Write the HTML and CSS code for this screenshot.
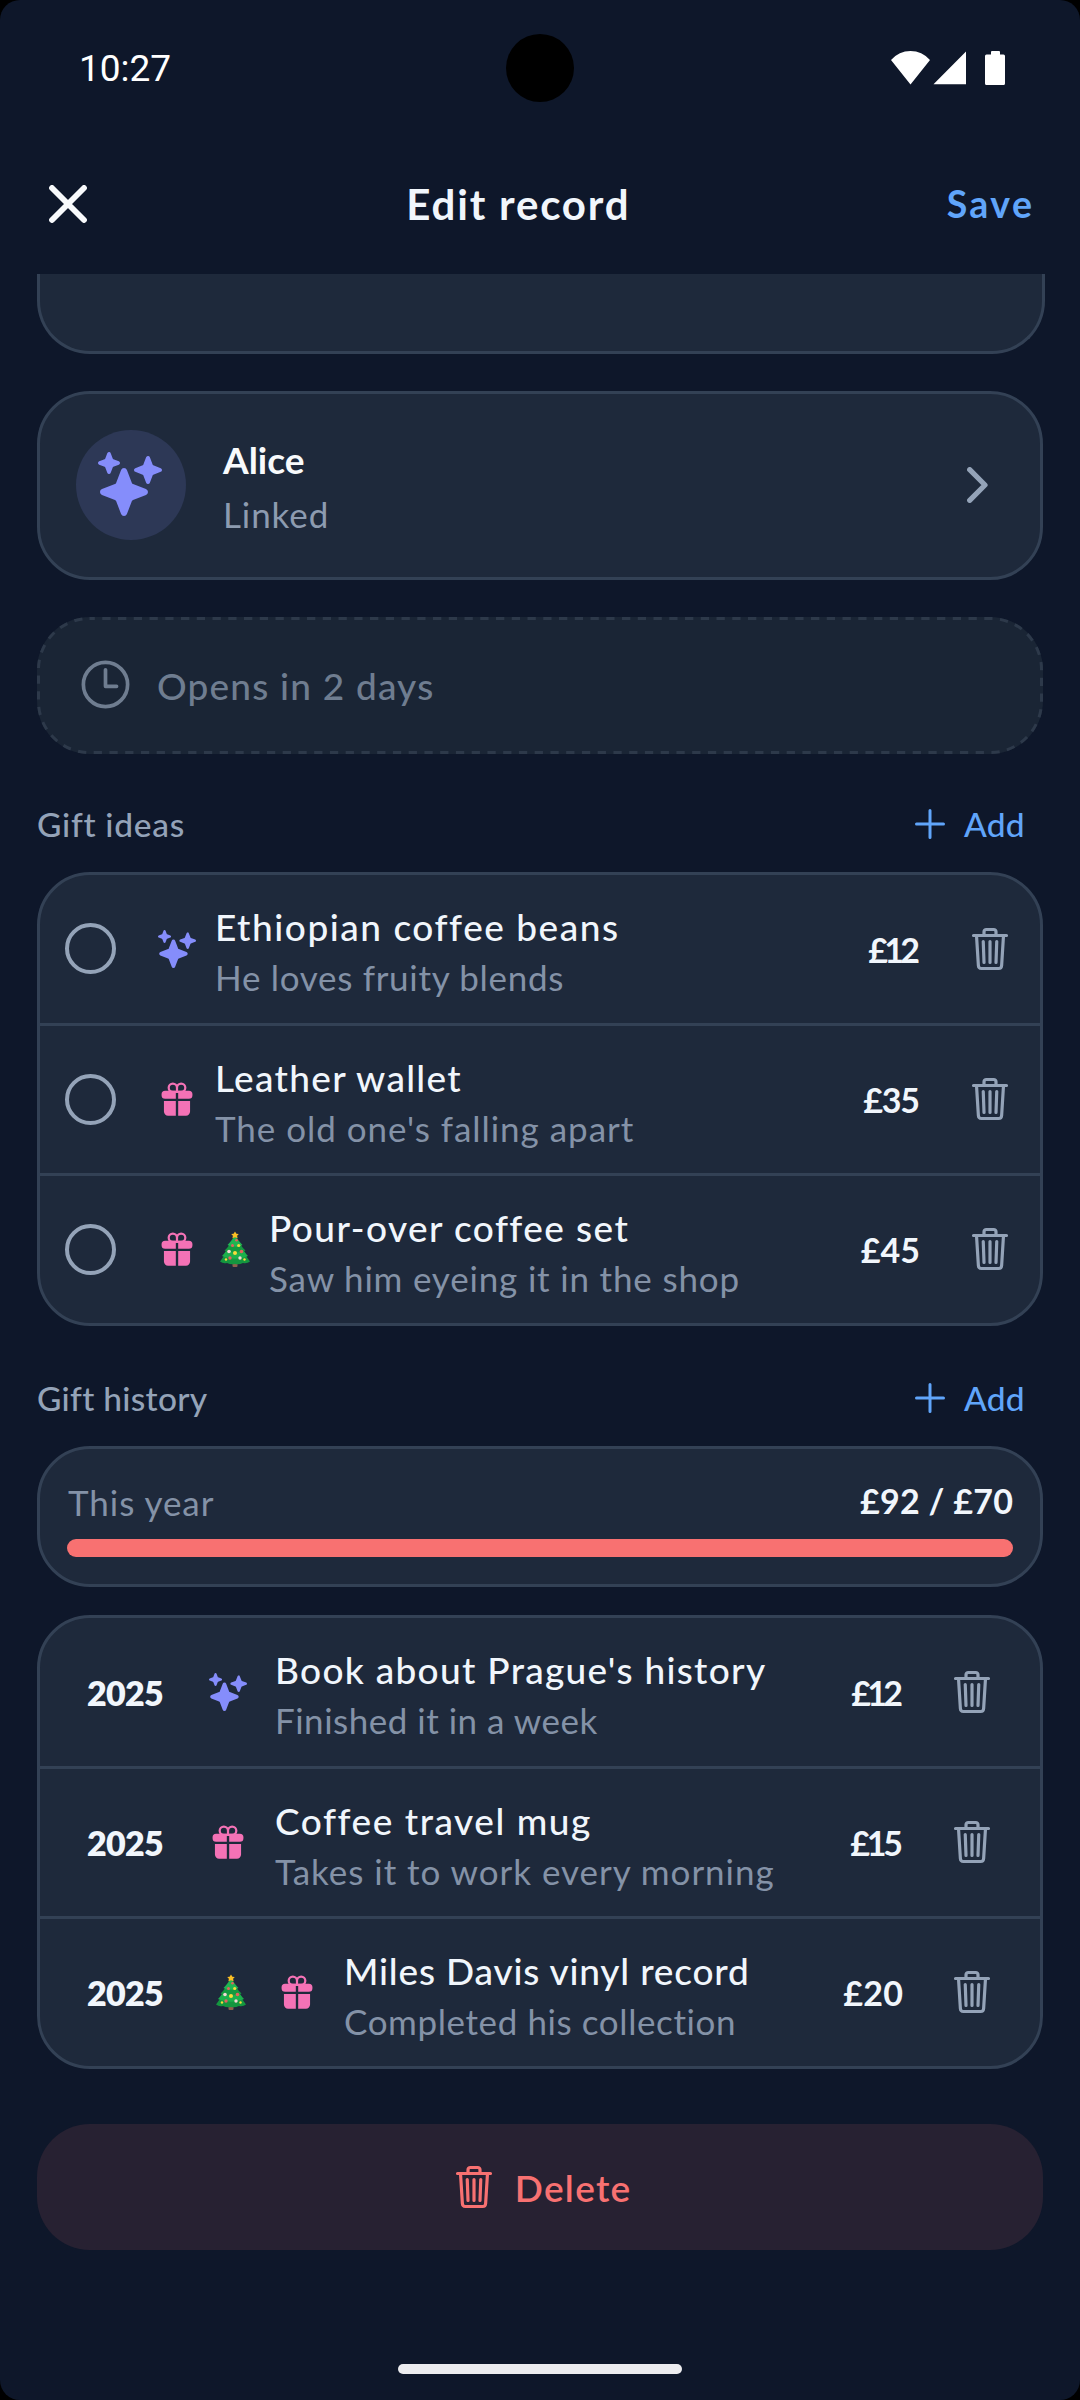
FILE: index.html
```html
<!DOCTYPE html>
<html lang="en">
<head>
<meta charset="utf-8">
<title>Edit record</title>
<link rel="stylesheet" href="styles.css">
</head>
<body>
<svg class="defs" aria-hidden="true">
  <symbol id="trash" viewBox="0 0 512 512">
    <g fill="none" stroke="currentColor" stroke-width="34" stroke-linecap="round" stroke-linejoin="round">
      <path d="M112 112l20 320c.95 18.49 14.4 32 32 32h184c17.67 0 30.87-13.51 32-32l20-320M80 112h352M192 112V72a23.93 23.93 0 0 1 24-24h80a23.93 23.93 0 0 1 24 24v40M256 176v224M184 176l8 224M328 176l-8 224"/>
    </g>
  </symbol>
  <symbol id="sparkles" viewBox="0 0 512 512">
    <path fill="currentColor" d="M208 512a24.84 24.84 0 0 1-23.34-16l-39.84-103.6a16.06 16.06 0 0 0-9.19-9.19L32 343.34a25 25 0 0 1 0-46.68l103.6-39.84a16.06 16.06 0 0 0 9.19-9.19L184.66 144a25 25 0 0 1 46.68 0l39.84 103.6a16.06 16.06 0 0 0 9.19 9.19l103 39.63a25.49 25.49 0 0 1 16.63 24.1 24.82 24.82 0 0 1-16 22.82l-103.6 39.84a16.06 16.06 0 0 0-9.19 9.19L231.34 496A24.84 24.84 0 0 1 208 512zM88 176a14.67 14.67 0 0 1-13.69-9.4l-16.86-43.84a7.28 7.28 0 0 0-4.21-4.21L9.4 101.69a14.67 14.67 0 0 1 0-27.38l43.84-16.86a7.31 7.31 0 0 0 4.21-4.21L74.16 9.79A15 15 0 0 1 86.23.11a14.67 14.67 0 0 1 15.46 9.29l16.86 43.84a7.31 7.31 0 0 0 4.21 4.21l43.84 16.86a14.67 14.67 0 0 1 0 27.38l-43.84 16.86a7.28 7.28 0 0 0-4.21 4.21l-16.86 43.84A14.67 14.67 0 0 1 88 176zM400 256a16 16 0 0 1-14.93-10.26l-22.84-59.37a8 8 0 0 0-4.6-4.6l-59.37-22.84a16 16 0 0 1 0-29.86l59.37-22.84a8 8 0 0 0 4.6-4.6l22.67-58.95a16.45 16.45 0 0 1 13.17-10.57 16 16 0 0 1 16.86 10.15l22.84 59.37a8 8 0 0 0 4.6 4.6l59.37 22.84a16 16 0 0 1 0 29.86l-59.37 22.84a8 8 0 0 0-4.6 4.6l-22.84 59.37A16 16 0 0 1 400 256z"/>
  </symbol>
  <symbol id="gift" viewBox="0 0 512 512">
    <path fill="none" stroke="currentColor" stroke-width="30" d="M256 104v56h-56a56 56 0 1 1 56-56zM256 104v56h56a56 56 0 1 0-56-56z"/>
    <path fill="currentColor" d="M96 144h144v108H96a48 48 0 0 1-48-48v-12a48 48 0 0 1 48-48zM272 144h144a48 48 0 0 1 48 48v12a48 48 0 0 1-48 48H272zM80 282h160v198H136a56 56 0 0 1-56-56zM272 282h160v142a56 56 0 0 1-56 56H272z"/>
  </symbol>
  <symbol id="plus" viewBox="0 0 512 512">
    <path fill="none" stroke="currentColor" stroke-width="32" stroke-linecap="round" d="M256 112v288M400 256H112"/>
  </symbol>
  <symbol id="tree" viewBox="0 0 30 36">
    <rect x="12.500" y="29" width="5" height="6.500" rx="1" fill="#8d5f4c"/>
    <path fill="#14963f" d="M15 17L3.500 25Q1.500 28 0 30Q3 32.500 7 31.500Q11 33.500 15 32.500Q19 33.500 23 31.500Q27 32.500 30 30Q28.500 28 26.500 25z"/>
    <path fill="#1cb04c" d="M15 11L6 19.500Q4 22.500 2 24.500Q6.500 27 10 26Q15 28.500 20 26Q23.500 27 28 24.500Q26 22.500 24 19.500z"/>
    <path fill="#14993f" d="M15 8L8.500 14.500Q7 17 4.500 19Q8 21 11 20.200Q15 22 19 20.200Q22 21 25.500 19Q23 17 21.500 14.500z"/>
    <path fill="#20b552" d="M15 4L11 9.500Q9 12 7.500 13.500Q11.500 16 15 15Q18.500 16 22.500 13.500Q21 12 19 9.500z"/>
    <path fill="#fbbf24" d="M15 0l1.400 2.200 2.400.3-1.700 1.800.5 2.500-2.600-1.100-2.600 1.100.5-2.500-1.700-1.800 2.400-.3z"/>
    <g fill="#e2635c"><circle cx="16.500" cy="8.800" r="1.300"/><circle cx="12.500" cy="14" r="1.500"/><circle cx="21.500" cy="20" r="1.800"/><circle cx="10" cy="26.500" r="1.700"/></g>
    <g fill="#f7dc3c"><circle cx="18.700" cy="14" r="1.600"/><circle cx="15" cy="21.500" r="2"/><circle cx="6" cy="28" r="1.200"/><circle cx="24.500" cy="28" r="1.200"/></g>
    <g fill="#f3d9d5"><circle cx="9" cy="20" r="1.800"/><circle cx="20" cy="26.500" r="1.700"/></g>
  </symbol>
</svg>

<div class="screen">
  <div class="camera"></div>
  <div class="status">
    <span class="clock">10:27</span>
    <svg class="status-icons" viewBox="0 0 114 34">
      <path fill="#fff" d="M19.500 33.500L0 9Q8 0 19.500 0T39 9zM75 .5v32.700H42.500zM95.500 3.500h4.500V1q0-1 1-1h7q1 0 1 1v2.500h3.500q1.500 0 1.500 1.500v27.500q0 1.500-1.500 1.500h-17q-1.500 0-1.500-1.500V5q0-1.500 1.500-1.500z"/>
    </svg>
  </div>

  <header class="appbar">
    <svg class="close" viewBox="0 0 38 38"><path d="M3 3l32 32M35 3L3 35"/></svg>
    <h1 class="appbar-title">Edit record</h1>
    <span class="save">Save</span>
  </header>

  <main class="content">
    <div class="card card-cut"></div>

    <section class="card person">
      <div class="avatar"><svg><use href="#sparkles"/></svg></div>
      <div class="person-text">
        <div class="person-name">Alice</div>
        <div class="person-state">Linked</div>
      </div>
      <svg class="chevron" viewBox="0 0 21 36"><path d="M2.700 2.700L18 18 2.700 33.300"/></svg>
    </section>

    <section class="locked">
      <svg class="locked-border" viewBox="0 0 1006 137"><rect x="1.500" y="1.500" width="1003" height="134" rx="51"/></svg>
      <svg class="locked-icon" viewBox="0 0 512 512"><path d="M256 64C150 64 64 150 64 256s86 192 192 192 192-86 192-192S362 64 256 64z"/><path d="M256 128v144h96"/></svg>
      <span class="tr-12">Opens in 2 days</span>
    </section>

    <div class="section-head">
      <h2 class="tr-07">Gift ideas</h2>
      <span class="add"><svg><use href="#plus"/></svg>Add</span>
    </div>
    <section class="card list ideas">
      <div class="row">
        <span class="radio"></span>
        <svg class="icon sparkle"><use href="#sparkles"/></svg>
        <div class="text"><div class="name tr-15">Ethiopian coffee beans</div><div class="note tr-07">He loves fruity blends</div></div>
        <span class="price tr-n37">£12</span>
        <svg class="trash"><use href="#trash"/></svg>
      </div>
      <div class="row">
        <span class="radio"></span>
        <svg class="icon gift"><use href="#gift"/></svg>
        <div class="text"><div class="name tr-13">Leather wallet</div><div class="note tr-10">The old one's falling apart</div></div>
        <span class="price tr-n12">£35</span>
        <svg class="trash"><use href="#trash"/></svg>
      </div>
      <div class="row">
        <span class="radio"></span>
        <svg class="icon gift"><use href="#gift"/></svg>
        <svg class="tree"><use href="#tree"/></svg>
        <div class="text"><div class="name tr-14">Pour-over coffee set</div><div class="note tr-08">Saw him eyeing it in the shop</div></div>
        <span class="price">£45</span>
        <svg class="trash"><use href="#trash"/></svg>
      </div>
    </section>

    <div class="section-head section-head-history">
      <h2 class="tr-03">Gift history</h2>
      <span class="add"><svg><use href="#plus"/></svg>Add</span>
    </div>
    <section class="card budget">
      <div class="budget-row">
        <span class="budget-label tr-10">This year</span>
        <span class="budget-value tr-03">£92 / £70</span>
      </div>
      <div class="bar"></div>
    </section>

    <section class="card list history">
      <div class="row">
        <span class="year">2025</span>
        <svg class="icon sparkle"><use href="#sparkles"/></svg>
        <div class="text"><div class="name tr-13">Book about Prague's history</div><div class="note tr-05">Finished it in a week</div></div>
        <span class="price tr-n37">£12</span>
        <svg class="trash"><use href="#trash"/></svg>
      </div>
      <div class="row">
        <span class="year">2025</span>
        <svg class="icon gift"><use href="#gift"/></svg>
        <div class="text"><div class="name tr-15">Coffee travel mug</div><div class="note tr-10">Takes it to work every morning</div></div>
        <span class="price tr-n32">£15</span>
        <svg class="trash"><use href="#trash"/></svg>
      </div>
      <div class="row">
        <span class="year">2025</span>
        <svg class="tree"><use href="#tree"/></svg>
        <svg class="icon gift"><use href="#gift"/></svg>
        <div class="text"><div class="name tr-08">Miles Davis vinyl record</div><div class="note tr-06">Completed his collection</div></div>
        <span class="price tr-03">£20</span>
        <svg class="trash"><use href="#trash"/></svg>
      </div>
    </section>

    <div class="delete">
      <svg><use href="#trash"/></svg>
      <span class="tr-13">Delete</span>
    </div>
  </main>

  <div class="home-bar"></div>
</div>
</body>
</html>
```
FILE: styles.css
```css
* { box-sizing: border-box; }
body { margin: 0; background: #000; }
.defs { display: none; }
svg { display: block; flex: none; }
h1, h2 { margin: 0; font-size: inherit; font-weight: inherit; }

.screen {
  position: relative;
  width: 1080px;
  height: 2400px;
  display: flex;
  flex-direction: column;
  overflow: hidden;
  border-radius: 20px;
  background: #0e172a;
  color: #f1f6fc;
  font-family: Lato, "Open Sans", sans-serif;
  white-space: nowrap;
}

/* letter tracking steps; the margin takes back the space after the last letter */
.tr-n37 { letter-spacing: -3.7px; margin-right: 3.7px; }
.tr-n32 { letter-spacing: -3.2px; margin-right: 3.2px; }
.tr-n12 { letter-spacing: -1.2px; margin-right: 1.2px; }
.tr-03 { letter-spacing: .28px; margin-right: -.28px; }
.tr-05 { letter-spacing: .5px; }
.tr-06 { letter-spacing: .6px; }
.tr-07 { letter-spacing: .7px; }
.tr-08 { letter-spacing: .82px; }
.tr-10 { letter-spacing: .97px; }
.tr-12 { letter-spacing: 1.2px; }
.tr-13 { letter-spacing: 1.3px; margin-right: -1.3px; }
.tr-14 { letter-spacing: 1.43px; }
.tr-15 { letter-spacing: 1.54px; }

/* system bars */
.camera { position: absolute; left: 506px; top: 34px; width: 68px; height: 68px; border-radius: 50%; background: #000; }
.status { flex: none; height: 134px; padding: 0 75px 0 79px; display: flex; align-items: center; justify-content: space-between; }
.clock { margin-top: 3px; font: 400 37px/44px Roboto, sans-serif; color: #fff; }
.status-icons { width: 114px; height: 34px; margin-top: 2px; }
.home-bar { position: absolute; left: 398px; top: 2364px; width: 284px; height: 10px; border-radius: 5px; background: #ececef; }

/* app bar */
.appbar { flex: none; height: 140px; padding: 0 48px 0 49px; display: flex; align-items: center; justify-content: space-between; }
.close { width: 38px; height: 38px; fill: none; stroke: #f8fafc; stroke-width: 5.8; stroke-linecap: round; }
.appbar-title { padding-left: 3px; font-size: 42px; font-weight: 700; letter-spacing: 1.8px; }
.save { padding-bottom: 1px; font-size: 37.5px; font-weight: 700; letter-spacing: 2.4px; margin-right: -2.4px; color: #60a5fa; }

.content { padding: 0 37px; }
.card { border: 3px solid #334155; border-radius: 53px; background: #1e293b; }
.card-cut { width: 1008px; height: 80px; border-top: 0; border-radius: 0 0 53px 53px; }

/* linked person */
.person { height: 189px; margin-top: 37px; padding: 0 52px 2px 36px; display: flex; align-items: center; }
.avatar { width: 110px; height: 110px; border-radius: 50%; background: #2d3856; padding: 22px; color: #858dfb; }
.avatar svg { width: 64px; height: 64px; }
.person-text { flex: 1; margin-left: 37px; padding-top: 4px; line-height: 54px; }
.person-name { font-size: 37px; font-weight: 700; color: #f8fafc; }
.person-state { font-size: 35px; letter-spacing: .9px; color: #8d9bb0; }
.chevron { width: 21px; height: 36px; fill: none; stroke: #94a3b8; stroke-width: 5.2; stroke-linecap: round; stroke-linejoin: round; }

/* locked notice */
.locked { position: relative; height: 137px; margin-top: 37px; padding-left: 39px; display: flex; align-items: center; gap: 22px; border-radius: 53px; background: #1a2535; color: #6f7d90; font-size: 37px; font-weight: 500; }
.locked-border { position: absolute; left: 0; top: 0; width: 1006px; height: 137px; fill: none; stroke: #2d394a; stroke-width: 3; stroke-dasharray: 8.3 7.450; stroke-dashoffset: 3; }
.locked-icon { width: 59px; height: 59px; margin-top: -3px; fill: none; stroke: currentColor; stroke-width: 32; stroke-linecap: round; stroke-linejoin: round; }

/* section headings */
.section-head { height: 118px; padding: 22px 18px 0 0; display: flex; align-items: center; justify-content: space-between; font-size: 33.5px; font-weight: 500; color: #94a3b8; }
.section-head-history { height: 120px; padding-top: 24px; }
.add { display: flex; align-items: center; gap: 10px; color: #60a5fa; letter-spacing: .3px; }
.add svg { width: 48px; height: 48px; }

/* lists */
.list { height: 454px; display: grid; grid-template-rows: 148px 150px 150px; }
.row { display: flex; align-items: center; padding: 0 26px 1px 25px; }
.row + .row { border-top: 3px solid #334155; }
.radio { flex: none; width: 51px; height: 51px; margin-right: 43px; border: 4px solid #94a3b8; border-radius: 50%; }
.icon { width: 38px; height: 38px; margin-left: -1px; }
.sparkle { color: #858dfb; }
.gift { color: #f472b6; }
.tree { width: 30px; height: 37px; margin-left: 24px; }
.text { flex: 1; margin-left: 19px; padding-top: 7px; line-height: 50px; }
.name { font-size: 37px; font-weight: 500; }
.note { font-size: 35px; color: #8492a7; }
.price { position: relative; left: 1px; padding-top: 1px; font-size: 34px; font-weight: 700; }
.trash { width: 48px; height: 48px; margin-left: 47px; color: #94a3b8; }

.history { margin-top: 28px; }
.history .row { padding: 0 44px 1px 47px; }
.history .text { margin-left: 28px; }
.history .tree { margin: 0 33px 0 6px; }
.history .trash { margin-left: 46px; }
.year { width: 76px; margin-right: 47px; padding-top: 1px; font-size: 34px; font-weight: 800; letter-spacing: -.7px; }

/* yearly budget */
.budget { height: 141px; padding: 14px 27px 0; }
.budget-row { height: 76px; display: flex; align-items: center; justify-content: space-between; }
.budget-label { padding: 2px 0 0 1px; font-size: 35px; color: #8492a7; }
.budget-value { padding-bottom: 2px; font-size: 34px; font-weight: 700; }
.bar { height: 18px; border-radius: 9px; background: #f87171; }

.delete { height: 126px; margin-top: 55px; display: flex; align-items: center; justify-content: center; gap: 17px; border-radius: 53px; background: #272132; color: #f87171; font-size: 37px; font-weight: 600; }
.delete svg { width: 48px; height: 48px; }
```
